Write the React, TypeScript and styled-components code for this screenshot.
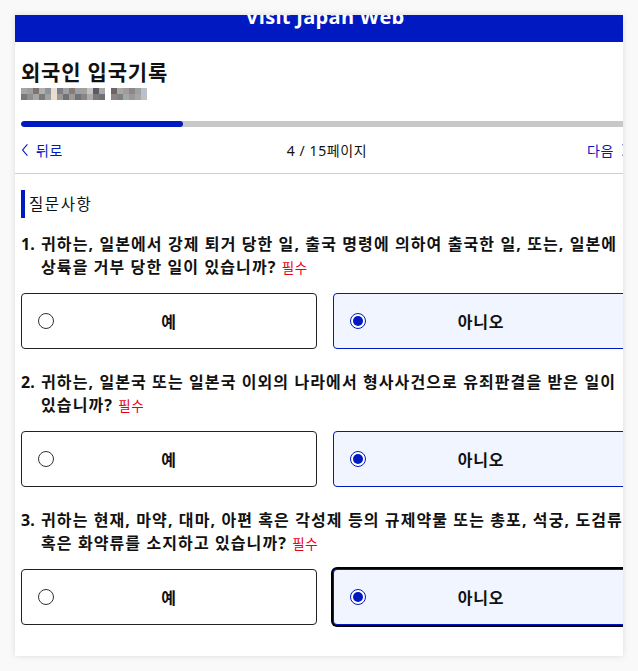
import styled, { createGlobalStyle } from "styled-components";

const GlobalStyle = createGlobalStyle`
  html, body {
    margin: 0;
    padding: 0;
    background: #f9f9f9;
    font-family: "Noto Sans", "Noto Sans CJK KR", sans-serif;
    color: #111;
  }
`;

type question = {
  no: number;
  lines: string[];
  answer: "yes" | "no";
  focused?: boolean;
};

const questions: question[] = [
  {
    no: 1,
    lines: ["귀하는, 일본에서 강제 퇴거 당한 일, 출국 명령에 의하여 출국한 일, 또는, 일본에", "상륙을 거부 당한 일이 있습니까?"],
    answer: "no",
  },
  {
    no: 2,
    lines: ["귀하는, 일본국 또는 일본국 이외의 나라에서 형사사건으로 유죄판결을 받은 일이", "있습니까?"],
    answer: "no",
  },
  {
    no: 3,
    lines: ["귀하는 현재, 마약, 대마, 아편 혹은 각성제 등의 규제약물 또는 총포, 석궁, 도검류", "혹은 화약류를 소지하고 있습니까?"],
    answer: "no",
    focused: true,
  },
];

const mosaicA = [
  ["#a5a5a5", "#9e9e9e", "#7f7570", "#b0b0b0", "#8d959c", "#e8ddd3", "#7a7f85", "#a0a0a0", "#857c77", "#9aa0a4", "#a89f97", "#bfc5c9", "#5d5a60", "#a7a9a8"],
  ["#787878", "#8d9093", "#a9a5a1", "#7b7b7b", "#a1a1a1", "#ecdccd", "#9c9894", "#6e7377", "#a09a96", "#707478", "#878585", "#b1aaa5", "#7a7a7a", "#6d7279"],
];
const mosaicB = [
  ["#6b6365", "#a9a7a5", "#a09c9c", "#8b878a", "#9fa0a0", "#b9c1c8"],
  ["#8f8580", "#7d8084", "#a8a6a4", "#9a989a", "#a6a6a6", "#b9c1c8"],
];

const Mosaic = ({ rows }: { rows: string[][] }) => (
  <MosaicGrid $cols={rows[0].length}>
    {rows.flat().map((c, i) => (
      <Cell key={i} style={{ background: c }} />
    ))}
  </MosaicGrid>
);

const Radio = ({ checked }: { checked: boolean }) => (
  <RadioCircle $checked={checked}>{checked && <RadioDot />}</RadioCircle>
);

const App = () => {
  return (
    <>
      <GlobalStyle />
      <Page>
        <Card>
          <Inner>
            <Header>
              <Brand>Visit Japan Web</Brand>
            </Header>
            <Body>
              <Title>외국인 입국기록</Title>
              <MosaicRow>
                <Mosaic rows={mosaicA} />
                <Mosaic rows={mosaicB} />
              </MosaicRow>
              <Progress>
                <ProgressFill style={{ width: `${(4 / 15) * 100}%` }} />
              </Progress>
              <Nav>
                <NavLink>
                  <Chevron viewBox="0 0 10 16">
                    <path d="M8 1 L2 8 L8 15" />
                  </Chevron>
                  뒤로
                </NavLink>
                <PageCount>4 / 15페이지</PageCount>
                <NavLink>
                  다음
                  <Chevron viewBox="0 0 10 16">
                    <path d="M2 1 L8 8 L2 15" />
                  </Chevron>
                </NavLink>
              </Nav>
            </Body>
            <Divider />
            <Body>
              <SectionTitle>질문사항</SectionTitle>
              {questions.map((q) => (
                <QuestionBlock key={q.no}>
                  <QuestionText>
                    <Num>{q.no}.</Num>
                    <span>
                      {q.lines[0]}
                      <br />
                      {q.lines[1]} <Required>필수</Required>
                    </span>
                  </QuestionText>
                  <Options>
                    <Option $selected={q.answer === "yes"}>
                      <Radio checked={q.answer === "yes"} />
                      <OptionLabel>예</OptionLabel>
                    </Option>
                    <Option $selected={q.answer === "no"} $focused={q.focused}>
                      <Radio checked={q.answer === "no"} />
                      <OptionLabel>아니오</OptionLabel>
                    </Option>
                  </Options>
                </QuestionBlock>
              ))}
            </Body>
          </Inner>
        </Card>
      </Page>
    </>
  );
};
export default App;

const Page = styled.div`
  padding: 15px;
  min-height: 671px;
  box-sizing: border-box;
`;

const Card = styled.div`
  width: 608px;
  height: 641px;
  background: #fff;
  overflow: hidden;
  box-shadow: 0 0 6px rgba(0, 0, 0, 0.12);
`;

const Inner = styled.div`
  width: 620px;
`;

const Header = styled.div`
  height: 27px;
  background: #0019c1;
  overflow: hidden;
  text-align: center;
`;

const Brand = styled.div`
  color: #fff;
  font-family: "Open Sans", "Noto Sans", sans-serif;
  font-weight: 700;
  font-size: 20px;
  line-height: 20px;
  margin-top: -8px;
  letter-spacing: 0.3px;
`;

const Body = styled.div`
  padding: 0 6px;
`;

const Title = styled.h1`
  margin: 0;
  padding-top: 16px;
  font-size: 21px;
  line-height: 28px;
  font-weight: 700;
  letter-spacing: 0.8px;
`;

const MosaicRow = styled.div`
  display: flex;
  gap: 6px;
  margin-top: 2px;
`;

const MosaicGrid = styled.div<{ $cols: number }>`
  display: grid;
  grid-template-columns: repeat(${(p) => p.$cols}, 6px);
  grid-auto-rows: 6px;
`;

const Cell = styled.span`
  display: block;
`;

const Progress = styled.div`
  margin-top: 21px;
  height: 6px;
  border-radius: 3px;
  background: #c8c8c8;
  overflow: hidden;
`;

const ProgressFill = styled.div`
  height: 100%;
  background: #0019c1;
  border-radius: 3px;
`;

const Nav = styled.div`
  display: flex;
  align-items: center;
  justify-content: space-between;
  height: 45px;
  padding-bottom: 1px;
`;

const NavLink = styled.div`
  display: flex;
  align-items: center;
  gap: 7px;
  color: #0019c1;
  font-size: 14px;
  letter-spacing: 0.6px;
`;

const Chevron = styled.svg`
  width: 8px;
  height: 14px;
  fill: none;
  stroke: #0019c1;
  stroke-width: 1.4;
`;

const PageCount = styled.div`
  font-size: 14px;
  letter-spacing: 0.6px;
  color: #111;
  margin-left: 4px;
`;

const Divider = styled.div`
  height: 1px;
  background: #cfcfcf;
`;

const SectionTitle = styled.div`
  margin-top: 16px;
  border-left: 4px solid #0019c1;
  padding-left: 4px;
  font-size: 15.5px;
  line-height: 28px;
  letter-spacing: 1.6px;
`;

const QuestionBlock = styled.div`
  margin-top: 15px;
  & + & {
    margin-top: 22px;
  }
`;

const QuestionText = styled.div`
  display: flex;
  font-size: 16px;
  line-height: 23px;
  font-weight: 700;
  letter-spacing: 1.1px;
  white-space: nowrap;
`;

const Num = styled.span`
  width: 20px;
  flex: none;
  letter-spacing: 0;
`;

const Required = styled.span`
  color: #e60012;
  font-size: 13.5px;
  font-weight: 400;
  letter-spacing: 0.6px;
`;

const Options = styled.div`
  display: grid;
  grid-template-columns: 1fr 1fr;
  gap: 16px;
  margin-top: 13px;
`;

const Option = styled.div<{ $selected: boolean; $focused?: boolean }>`
  height: 56px;
  box-sizing: border-box;
  border: 1px solid ${(p) => (p.$selected ? "#0019c1" : "#222")};
  background: ${(p) => (p.$selected ? "#f1f5ff" : "#fff")};
  border-radius: 4px;
  display: flex;
  align-items: center;
  padding-left: 16px;
  box-shadow: ${(p) => (p.$focused ? "0 0 0 2px #000" : "none")};
`;

const RadioCircle = styled.span<{ $checked: boolean }>`
  width: 16px;
  height: 16px;
  box-sizing: border-box;
  border-radius: 50%;
  border: 1.5px solid ${(p) => (p.$checked ? "#0019c1" : "#333")};
  background: #fff;
  display: flex;
  align-items: center;
  justify-content: center;
  flex: none;
`;

const RadioDot = styled.span`
  width: 10px;
  height: 10px;
  border-radius: 50%;
  background: #0019c1;
`;

const OptionLabel = styled.span`
  flex: 1;
  text-align: center;
  font-size: 16px;
  font-weight: 700;
  letter-spacing: 0.8px;
  margin-right: 32px;
`;
